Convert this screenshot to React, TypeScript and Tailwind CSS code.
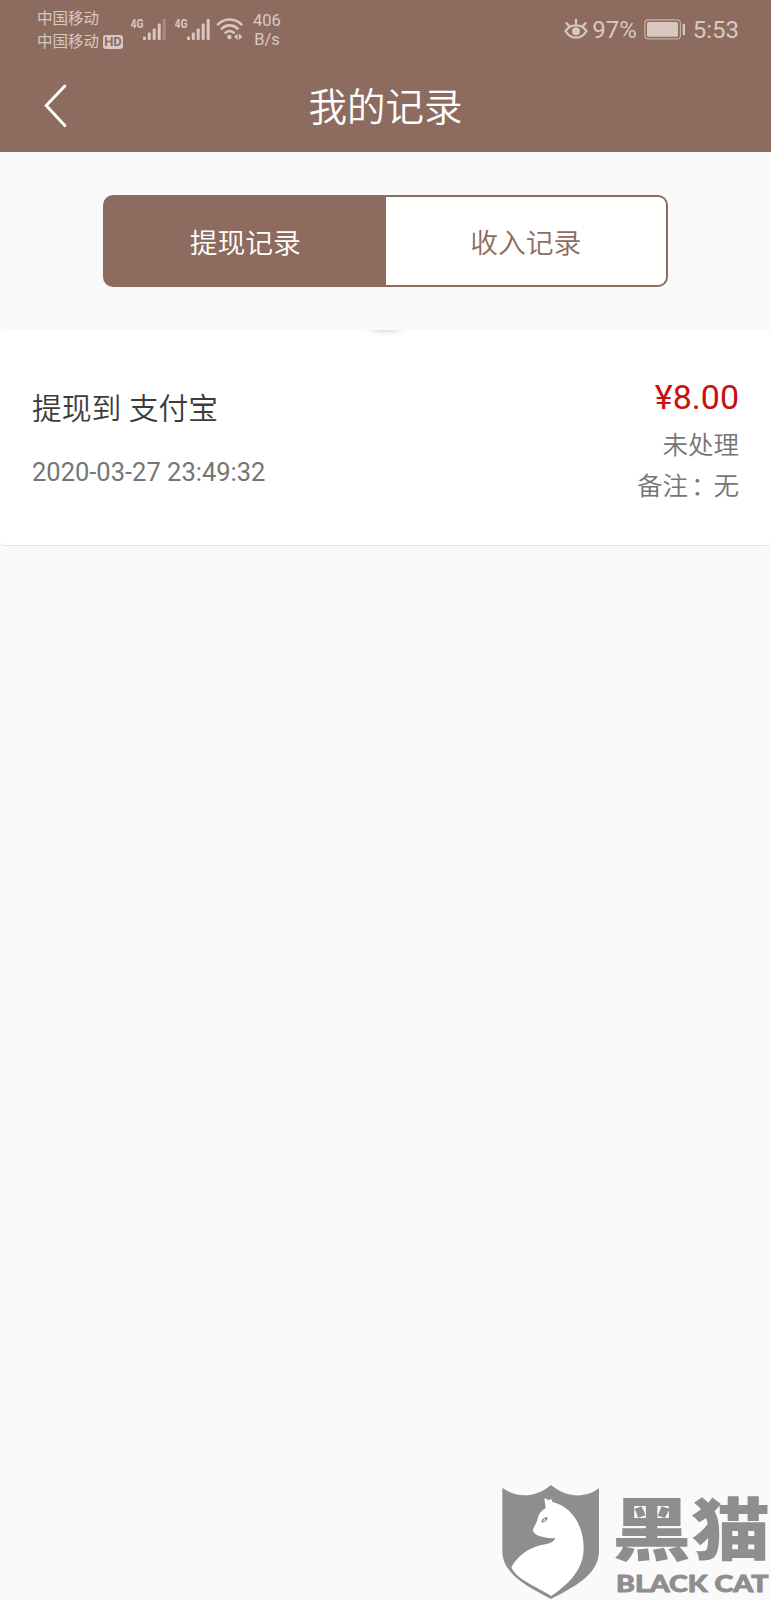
import React from 'react';

type TabKey = 'withdraw' | 'income';

const TABS: { key: TabKey; label: string }[] = [
    { key: 'withdraw', label: '提现记录' },
    { key: 'income', label: '收入记录' },
];

const RECORDS = [
    { id: 1, title: '提现到 支付宝', date: '2020-03-27 23:49:32', amount: '¥8.00', status: '未处理', remark: '无' },
];

const SignalIcon = ({ weak }: { weak?: boolean }) => (
    <svg className="h-[24px] w-[36px]" viewBox="0 0 36 24" fill="currentColor">
        <text x="-0.5" y="10.5" fontSize="13" fontWeight="700" textLength="13" lengthAdjust="spacingAndGlyphs">4G</text>
        <rect x="12" y="19.5" width="3" height="3.5" rx="1" />
        <rect x="16.8" y="15.5" width="3" height="7.5" rx="1" />
        <rect x="21.7" y="11.5" width="3" height="11.5" rx="1" />
        <rect x="26.7" y="6.5" width="3" height="16.5" rx="1" />
        <rect x="31.7" y="2" width="3" height="21" rx="1" opacity={weak ? 0.35 : 1} />
    </svg>
);

const WifiIcon = () => (
    <svg className="h-[24px] w-[28px]" viewBox="0 0 28 24" fill="none" stroke="currentColor" strokeWidth="2.6">
        <path d="M1.2 8.2C8 .6 19.4.6 26.2 8.2" />
        <path d="M5 12.4c5-5.4 12.4-5.4 17.4 0" />
        <path d="M8.8 16.4c3-3 6.8-3 9.8 0" />
        <circle cx="13.4" cy="20" r="2.2" fill="currentColor" stroke="none" />
        <path d="M21.6 16.5v6.5l-3.6-3.2zM22.8 16.5v6.5l3.6-3.2z" fill="currentColor" stroke="none" />
    </svg>
);

const EyeIcon = () => (
    <svg className="h-[22px] w-[24px]" viewBox="0 0 24 22" fill="none" stroke="currentColor" strokeWidth="2.2">
        <path d="M1.5 13C6.5 5.5 17.5 5.5 22.5 13 17.5 21.8 6.5 21.8 1.5 13Z" />
        <circle cx="12" cy="13.3" r="4" fill="currentColor" stroke="none" />
        <path d="M12 7V1M5.5 8.5 2 4.5M18.5 8.5l3.5-4" />
    </svg>
);

const BatteryIcon = () => (
    <svg className="h-[21px] w-[42px]" viewBox="0 0 42 21">
        <rect x=".9" y=".9" width="35.5" height="19" rx="3.5" fill="none" stroke="currentColor" strokeWidth="1.2" opacity=".75" />
        <rect x="3" y="3" width="31" height="14.8" rx="1.5" fill="currentColor" />
        <rect x="38.7" y="4.7" width="2.3" height="11.5" rx="1" fill="currentColor" />
    </svg>
);

const StatusBar = () => (
    <div className="flex h-[60px] items-start justify-between pl-[37px] pr-[32px] text-[#d9c8c0]">
        <div className="flex">
            <div className="flex w-[94px] flex-col pt-[8px] text-[15.5px] leading-[23px]">
                <span>中国移动</span>
                <div className="flex items-center gap-[4px]">
                    <span>中国移动</span>
                    <span className="-mt-[2px] flex h-[14px] w-[20px] items-center justify-center rounded-[3px] bg-[#d9c8c0] text-[13px] leading-none font-bold text-[#8d6c5f]">HD</span>
                </div>
            </div>
            <div className="flex pt-[17px]">
                <SignalIcon weak />
                <div className="w-[8px]" />
                <SignalIcon />
                <div className="w-[5px]" />
                <WifiIcon />
            </div>
            <div className="ml-[9px] w-[28px] pt-[11px] text-center text-[16.5px] leading-[19px]">
                <div>406</div>
                <div>B/s</div>
            </div>
        </div>
        <div className="flex items-center pt-[16px] text-[24px] leading-[29px]">
            <span className="-mt-[3px]"><EyeIcon /></span>
            <span className="ml-[4px]">97%</span>
            <span className="mr-[7px] ml-[7px] -mt-[3px]"><BatteryIcon /></span>
            <span>5:53</span>
        </div>
    </div>
);

const Watermark = () => (
    <svg className="absolute right-0 bottom-0 h-[130px] w-[281px]" viewBox="0 0 843 390" fill="#8f8d8e">
        <path d="M37 53C76 83 132 87 183 45c51 42 107 38 144 10v187c0 76-84 112-144 145C123 354 37 317 37 242Z" />
        <path
            d="M163 84 177 91 183 86 188 96C245 110 281 166 281 235c0 65-46 108-97 143C133 346 78 328 64 291c26-43 62-61 101-68 16-3 27-8 31-19-19 2-32-1-44-5-13-3-25-12-23-22 5-9 11-19 14-31 2-14 10-23 24-32Z"
            fill="#fff"
        />
        <path d="M154 153c5-9 10-12 19-12 0 9-6 15-17 17Z" />
        <path d="m159 153 6-8-1 9Z" fill="#fff" />
        <text
            transform="translate(367 256) scale(1 .88)"
            fontFamily="'Noto Sans CJK SC', sans-serif"
            fontSize="234"
            fontWeight="900"
            textLength="474"
            lengthAdjust="spacingAndGlyphs"
        >
            黑猫
        </text>
        <text
            x="378"
            y="366"
            fontFamily="Lato, sans-serif"
            fontSize="67"
            fontWeight="900"
            stroke="#8f8d8e"
            strokeWidth="2.5"
            textLength="457"
            lengthAdjust="spacingAndGlyphs"
        >
            BLACK CAT
        </text>
    </svg>
);

export default function App() {
    const [activeTab, setActiveTab] = React.useState<TabKey>('withdraw');

    return (
        <div className="relative min-h-[1600px] w-full overflow-hidden bg-[#fafafa] font-[Roboto,'Noto_Sans_CJK_SC',sans-serif]">
            <header className="h-[152px] bg-[#8d6c5f]">
                <StatusBar />
                <div className="grid h-[92px] grid-cols-[110px_1fr_110px] items-center text-white">
                    <button className="pl-[43px]" aria-label="返回">
                        <svg className="h-[45px] w-[26px]" viewBox="0 0 26 46" fill="none" stroke="currentColor" strokeWidth="3">
                            <path d="M22 2 3 22l19 20.5" strokeLinecap="round" />
                        </svg>
                    </button>
                    <h1 className="pt-[4px] text-center text-[38.5px] leading-[50px] font-[350]">我的记录</h1>
                </div>
            </header>

            <div className="flex h-[178px] items-start justify-center pt-[43px]">
                <div className="flex h-[92px] w-[565px] rounded-[10px] bg-[#8d6c5f] p-[2px]">
                    {TABS.map((tab) => (
                        <button
                            key={tab.key}
                            onClick={() => setActiveTab(tab.key)}
                            className={`flex-1 pt-[5px] text-[27.8px] font-[350] first:rounded-l-[8px] last:rounded-r-[8px] ${
                                activeTab === tab.key ? 'text-white' : 'bg-white text-[#8d6c5f]'
                            }`}
                        >
                            {tab.label}
                        </button>
                    ))}
                </div>
            </div>

            {activeTab === 'withdraw' && RECORDS.map((record) => (
                <div key={record.id} className="relative flex h-[216px] justify-between overflow-hidden rounded-[5px] border-b border-[#e2e2e2] bg-white px-[32px]">
                    {/* edge of the pull-to-refresh spinner */}
                    <div className="absolute -top-[82px] left-1/2 h-[80px] w-[80px] -translate-x-1/2 rounded-full shadow-[0_2px_7px_rgba(0,0,0,0.28)]" />
                    <div className="pt-[59px]">
                        <div className="text-[29.8px] leading-[40px] font-[350] text-[#3c3c3c]">{record.title}</div>
                        <div className="mt-[26px] text-[25.5px] leading-[34px] text-[#757575]">{record.date}</div>
                    </div>
                    <div className="pt-[46px] text-right text-[25.5px] leading-[41px] font-[350] text-[#757575]">
                        <div className="text-[34px] leading-[42px] font-normal text-[#c90f0f]">{record.amount}</div>
                        <div className="mt-[7px]">{record.status}</div>
                        <div>备注<span className="relative left-[3px]">：</span>{record.remark}</div>
                    </div>
                </div>
            ))}

            <Watermark />
        </div>
    );
}
